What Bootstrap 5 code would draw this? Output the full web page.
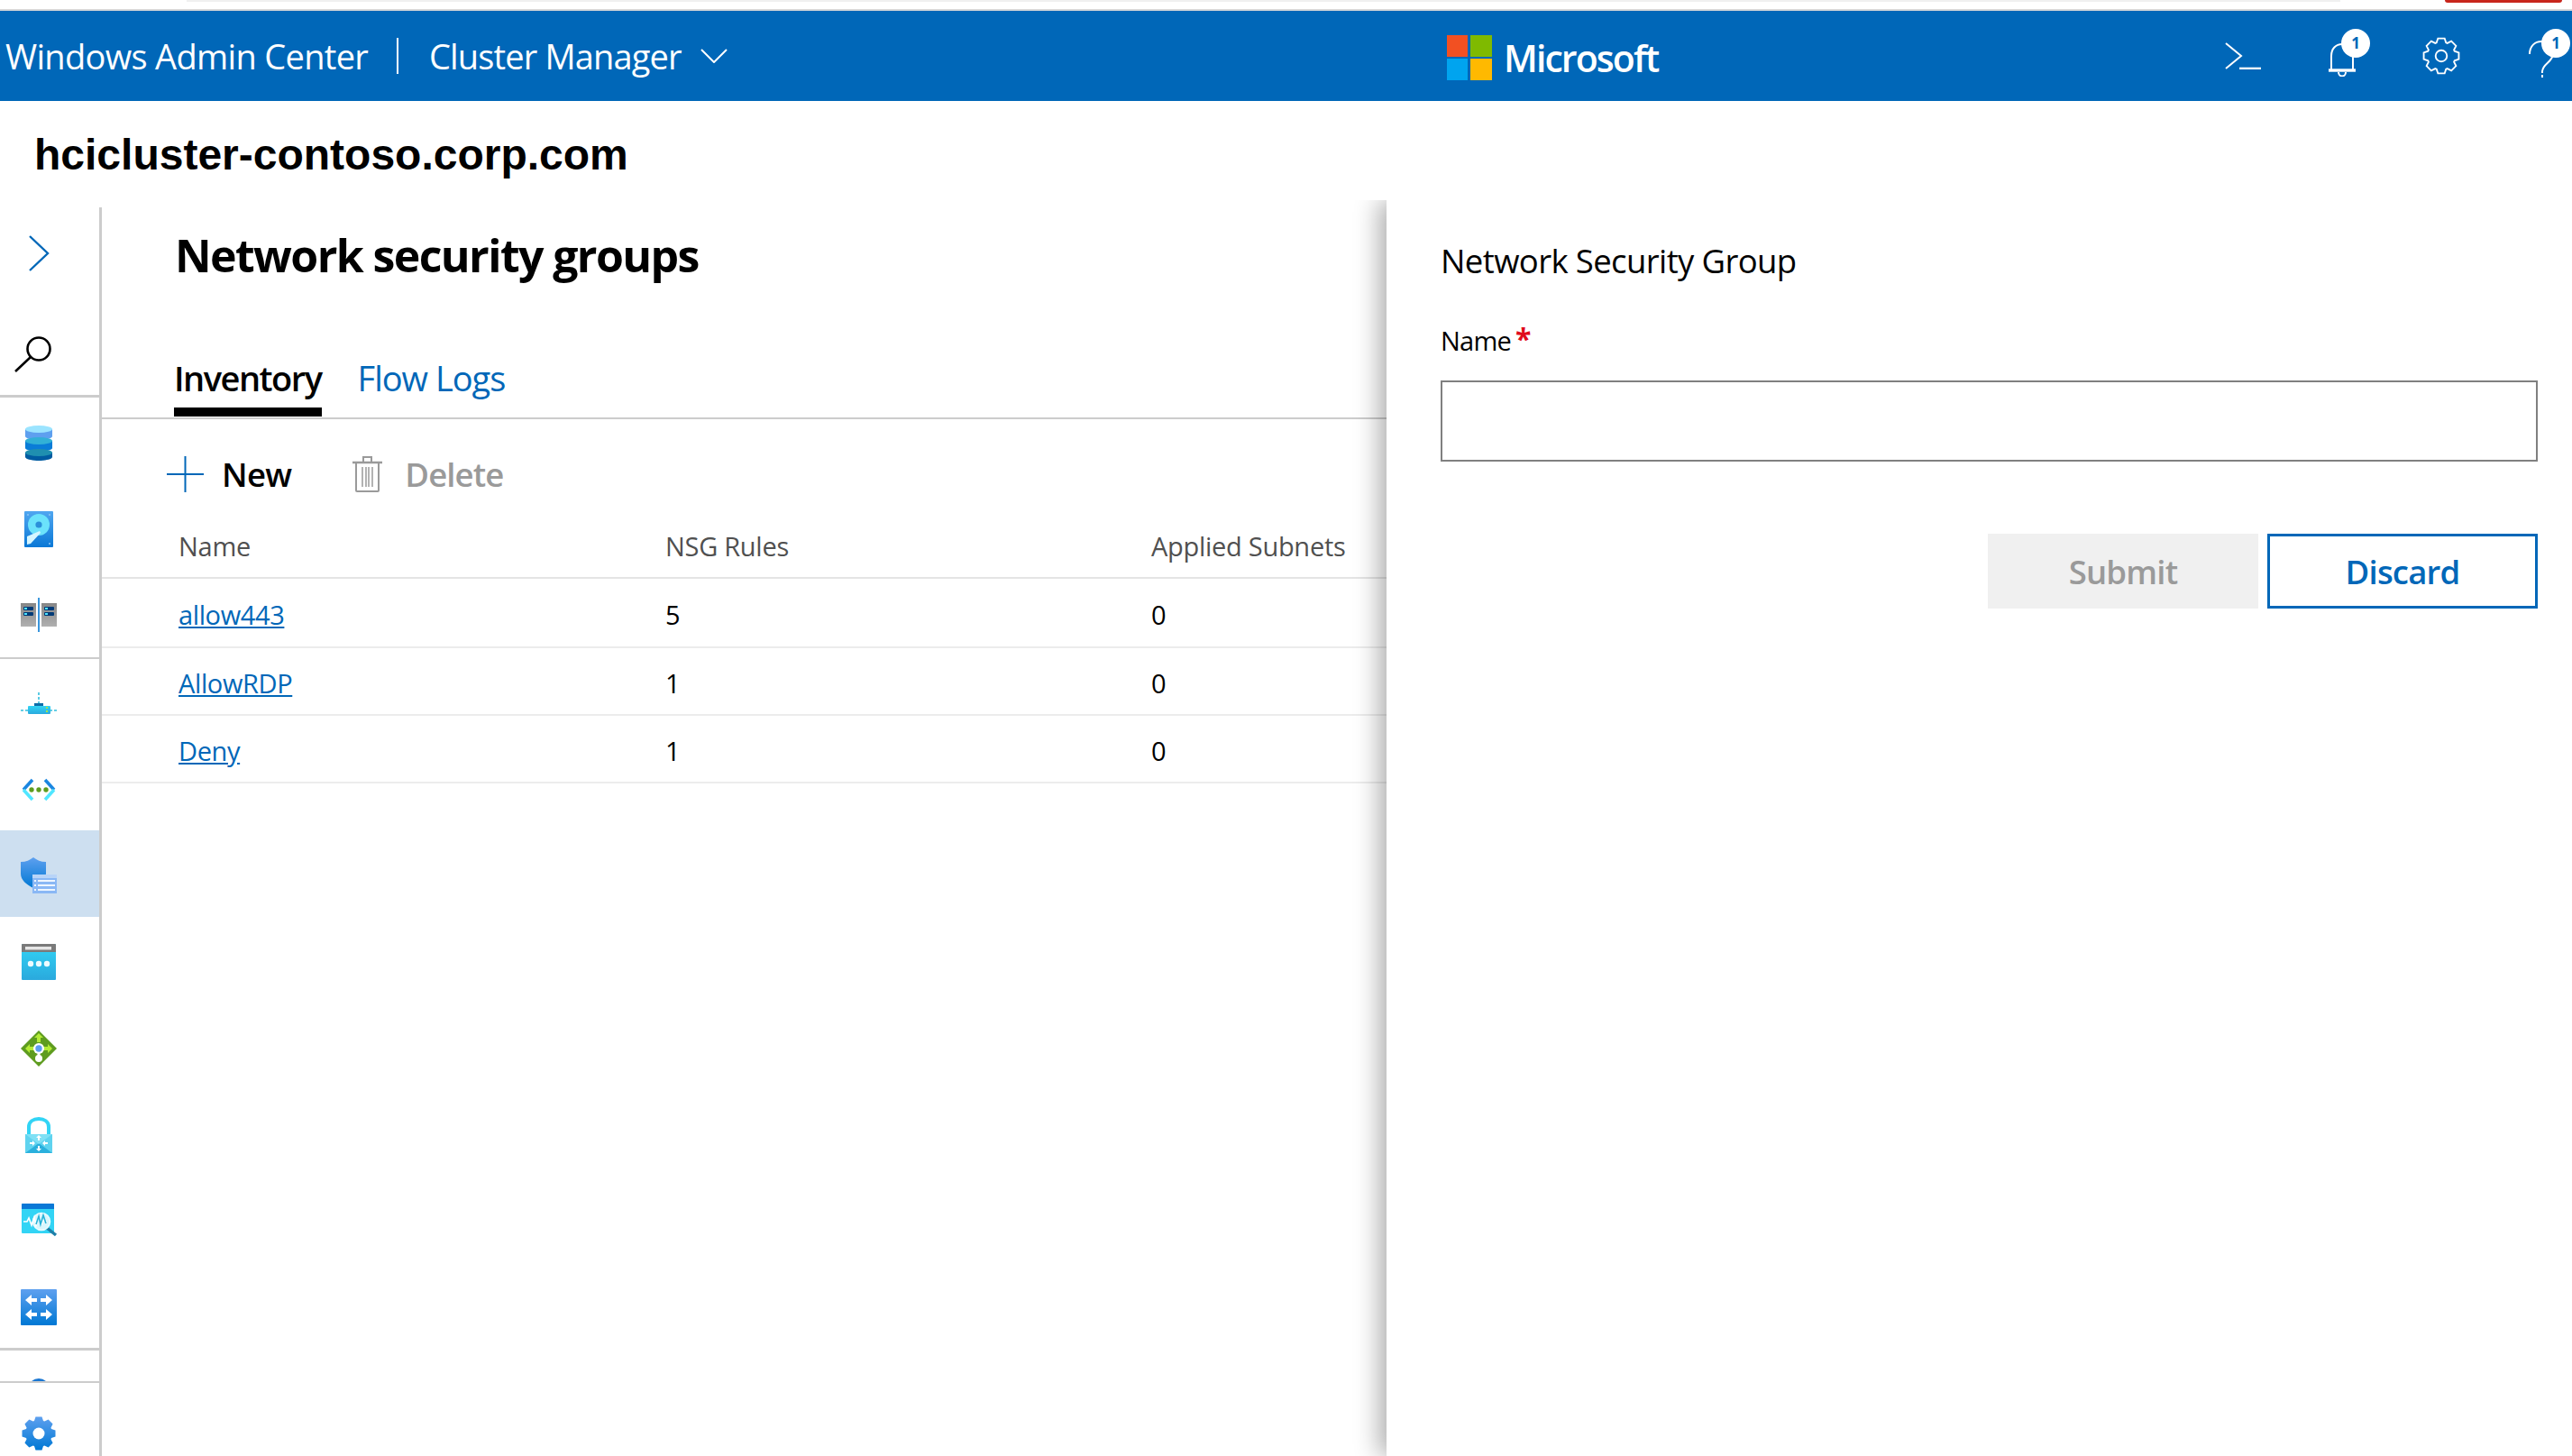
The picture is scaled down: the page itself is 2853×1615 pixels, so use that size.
<!DOCTYPE html>
<html lang="en">
<head>
<meta charset="utf-8">
<title>Network security groups</title>
<link rel="stylesheet" href="https://cdn.jsdelivr.net/npm/bootstrap@5.3.0/dist/css/bootstrap.min.css">
<style>
:root{--wac:#0067b8;}
html,body{height:100%;overflow:hidden;background:#fff;}
body{font-family:"Open Sans","Noto Sans",sans-serif;color:#000;}
.svg-defs{width:0;height:0;}
.strip-top{height:10px;}
.strip-pad{width:207px;}
.strip-grey{width:2389px;height:2px;background:#f0f0f0;}
.strip-gap{width:116px;}
.strip-red{width:130px;height:3px;background:#c8261c;border-radius:0 0 6px 6px;}
.wac-bar{height:102px;background:var(--wac);border-top:2px solid #d8d8d8;padding:0;flex-wrap:nowrap;color:#fff;}
.wac-brand{width:440px;padding-left:6px;font-size:38px;font-weight:500;letter-spacing:-.68px;white-space:nowrap;}
.wac-sep{width:2px;height:40px;background:#fff;}
.wac-prod{width:335px;padding-left:34px;font-size:38px;font-weight:500;letter-spacing:-.85px;white-space:nowrap;}
.wac-caret{width:30px;height:16px;}
.wac-logo-wrap{margin-left:798px;width:863px;padding-top:3px;}
.wac-logo{width:50px;height:50px;margin-right:13px;}
.wac-ms{font-size:41px;font-weight:600;letter-spacing:-1.9px;line-height:50px;}
.term-ic{width:40px;height:30px;margin-right:75px;}
.bell-box{position:relative;width:46px;height:60px;margin-right:58px;}
.bell-ic{position:absolute;left:0;top:15px;width:30px;height:38px;}
.gear-box{width:42px;height:42px;margin-right:75px;}
.q-box{position:relative;width:47px;height:60px;}
.q-ic{position:absolute;left:0;top:13px;width:30px;height:41px;}
.bub{position:absolute;top:0;left:14px;width:32px;height:32px;border-radius:50%;background:#fff;color:var(--wac);font-size:17px;font-weight:700;line-height:32px;text-align:center;}
.q-box .bub{left:15px;}
.host-band{height:118px;padding:27px 0 0 38px;}
.host-name{font-family:"Liberation Sans",Arial,sans-serif;font-weight:700;font-size:48px;line-height:66px;margin:0;}
.work{height:1385px;}
.rail{width:113px;flex:none;border-right:3px solid #ccc;height:100%;overflow:hidden;}
.rail-top{height:211px;padding-top:3px;border-bottom:3px solid #ccc;}
.rail-top .rail-it:last-child{margin-top:16px;}
.rail-group{border-bottom:2px solid #ccc;}
.rail-group.rg-two{border-bottom-width:3px;}
.rail-it{height:96px;display:flex;align-items:center;justify-content:center;padding-right:24px;}
.rail-group .rail-it{padding-top:4px;}
.rail-it.it-s{height:95px;}
.rail-it.it-e{height:94px;}
.rail-it svg{width:40px;height:40px;display:block;overflow:visible;}
.rail-it.on{background:#cddff0;}
.rail-clip{height:36px;border-bottom:2px solid #ccc;overflow:hidden;position:relative;padding-right:24px;}
.rail-arc{width:24px;height:24px;border-radius:50%;background:#1b77d2;margin:31px auto 0;}
.rail-last{padding:36px 24px 0 0;}
.rail-last svg{width:40px;height:40px;display:block;margin:0 auto;}
.mainp{width:1425px;flex:none;}
.page-ttl{height:150px;margin:0;padding:18px 0 0 81px;font-size:50px;line-height:70px;font-weight:700;letter-spacing:-1.6px;}
.wac-tabs{height:85px;border-bottom:2px solid #ccc;padding-left:80px;gap:40px;align-items:flex-end;flex-wrap:nowrap;}
.wac-tabs .nav-link{padding:0;height:73px;font-size:38px;line-height:58px;letter-spacing:-1px;color:var(--wac);border-bottom:0;border-radius:0;}
.wac-tabs .nav-link.active{color:#000;font-weight:600;border-bottom:10px solid #000;letter-spacing:-1.5px;margin-bottom:1px;height:72px;}
.tool-row{height:120px;padding:2px 0 0 72px;}
.tool-btn{display:flex;align-items:center;background:none;border:0;padding:0;font-size:36.5px;font-weight:600;letter-spacing:-.7px;line-height:50px;color:#000;}
.tool-btn:disabled{color:#9a9a9a;opacity:1;letter-spacing:-.9px;}
.tool-btn svg{display:block;}
.ic-plus{width:41px;height:40px;margin-right:20px;}
.ic-trash{width:33px;height:40px;margin-right:25px;}
.tool-del{margin-left:68px;}
.nsg-table{table-layout:fixed;width:100%;margin:0;font-size:29px;}
.nsg-table th,.nsg-table td{padding:0;border-bottom:2px solid #ececec;color:#000;box-shadow:none;background:transparent;}
.nsg-table th{height:56px;vertical-align:top;padding-top:1px;font-weight:400;color:#505050;line-height:40px;border-bottom-color:#e4e4e4;letter-spacing:-.28px;}
.nsg-table td{height:75px;vertical-align:middle;padding-top:5px;line-height:40px;letter-spacing:-.38px;}
.nsg-table tbody tr:first-child td{height:77px;}
.nsg-table .c1{width:625px;padding-left:85px;}
.nsg-table .c2{width:539px;}
.nsg-table a{color:var(--wac);text-decoration:underline;}
.side-pan{position:relative;z-index:5;flex:1 1 0;margin-top:-8px;padding:32px 38px 0 60px;background:#fff;box-shadow:-8px 0 26px rgba(0,0,0,.32);clip-path:inset(0 0 -40px -40px);}
.side-ttl{font-size:36.5px;font-weight:400;line-height:70px;letter-spacing:-.62px;margin:0 0 34px;}
.side-lbl{font-size:29px;line-height:40px;letter-spacing:-.75px;margin:0 0 24px;display:block;}
.side-star{color:#e00b1c;font-size:32px;font-weight:700;line-height:20px;vertical-align:top;position:relative;top:8px;margin-left:5px;}
.side-inp{height:90px;border:2px solid #808080;border-radius:0;padding:0 14px;box-shadow:none;}
.side-acts{margin-top:80px;gap:10px;}
.side-btn{width:300px;height:83px;border-radius:0;font-size:36.5px;font-weight:600;letter-spacing:-.8px;padding:2px 0 0;line-height:1;}
.btn-sub:disabled{background:#f0f0f0;border:0;color:#9a9a9a;opacity:1;}
.btn-disc{background:#fff;border:3px solid var(--wac);color:var(--wac);}
</style>
</head>
<body class="d-flex flex-column">
<svg class="svg-defs position-absolute" aria-hidden="true">
<defs>
<linearGradient id="gBlue" x1="0" y1="0" x2="0" y2="1"><stop offset="0" stop-color="#5ea0ef"/><stop offset="1" stop-color="#0078d4"/></linearGradient>
<linearGradient id="gCyan" x1="0" y1="0" x2="0" y2="1"><stop offset="0" stop-color="#32d4f5"/><stop offset="1" stop-color="#2aa9dd"/></linearGradient>
<linearGradient id="gGrey" x1="0" y1="0" x2="0" y2="1"><stop offset="0" stop-color="#868686"/><stop offset="1" stop-color="#b0b0b0"/></linearGradient>
<linearGradient id="gDisk" x1="0" y1="0" x2="0" y2="1"><stop offset="0" stop-color="#50a6f0"/><stop offset="1" stop-color="#0a78d6"/></linearGradient>
</defs>
</svg>

<div class="strip-top d-flex flex-shrink-0"><div class="strip-pad"></div><div class="strip-grey"></div><div class="strip-gap"></div><div class="strip-red"></div></div>

<nav class="navbar wac-bar flex-shrink-0 justify-content-start">
  <div class="wac-brand">Windows Admin Center</div>
  <div class="wac-sep"></div>
  <div class="wac-prod">Cluster Manager</div>
  <svg class="wac-caret" viewBox="0 0 30 16" fill="none" stroke="#fff" stroke-width="2"><path d="M1 1l14 14L29 1"/></svg>
  <div class="wac-logo-wrap d-flex align-items-center">
    <svg class="wac-logo" viewBox="0 0 50 50"><rect width="23" height="24" fill="#f25022"/><rect x="26" width="24" height="24" fill="#7fba00"/><rect y="26" width="23" height="24" fill="#00a4ef"/><rect x="26" y="26" width="24" height="24" fill="#ffb900"/></svg>
    <span class="wac-ms">Microsoft</span>
  </div>
  <svg class="term-ic" viewBox="0 0 40 30" fill="none" stroke="#fff" stroke-width="2"><path d="M1 1l17 14L1 29"/><path d="M16 29h24" stroke-width="2.6"/></svg>
  <div class="bell-box">
    <svg class="bell-ic" viewBox="0 0 30 38" fill="none" stroke="#fff" stroke-width="2"><path d="M3 30V15C3 7 8 2 15 2s12 5 12 13v15"/><path d="M0 31h30" stroke-width="3.4"/><path d="M11 33c0 6 8 6 8 0"/></svg>
    <div class="bub">1</div>
  </div>
  <svg class="gear-box" viewBox="-20 -20 40 40" fill="none" stroke="#fff" stroke-width="1.8"><path d="M-5-14L-3.500-18.500H3.500L5-14L6.360-13.440L10.610-15.560L15.560-10.610L13.440-6.360L14-5L18.500-3.500V3.500L14 5L13.440 6.360L15.560 10.610L10.610 15.560L6.360 13.440L5 14L3.500 18.500H-3.500L-5 14L-6.360 13.440L-10.610 15.560L-15.560 10.610L-13.440 6.360L-14 5L-18.500 3.500V-3.500L-14-5L-13.440-6.360L-15.560-10.610L-10.610-15.560L-6.360-13.440Z"/><circle r="6"/></svg>
  <div class="q-box">
    <svg class="q-ic" viewBox="0 0 30 41" fill="none" stroke="#fff" stroke-width="2"><path d="M2 15C2 6 8 1 15 1s13 5 13 13c0 10-11 11-12 20v2"/><path d="M16 38v3"/></svg>
    <div class="bub">1</div>
  </div>
</nav>

<div class="host-band flex-shrink-0"><h2 class="host-name">hcicluster-contoso.corp.com</h2></div>

<div class="work d-flex flex-grow-1">
  <aside class="rail">
    <div class="rail-top">
      <div class="rail-it"><svg viewBox="0 0 40 40" fill="none" stroke="#0067b8" stroke-width="2.4"><path d="M10 1l20 19-20 19"/></svg></div>
      <div class="rail-it"><svg viewBox="0 0 40 40" fill="none" stroke="#000" stroke-width="2.6"><circle cx="20" cy="14" r="12.500"/><path d="M11 23L-6 39"/></svg></div>
    </div>
    <div class="rail-group">
      <div class="rail-it"><svg viewBox="0 0 40 40"><path d="M5 5v8c0 2 7 4 15 4s15-2 15-4V5z" fill="#5ea0ef"/><ellipse cx="20" cy="5" rx="15" ry="4" fill="#9be4ff"/><path d="M5 18v8c0 2 7 3.500 15 3.500s15-1.500 15-3.500v-8z" fill="#0a7cd7"/><ellipse cx="20" cy="18" rx="15" ry="4" fill="#32b0d6"/><path d="M5 31v5c0 2 7 4 15 4s15-2 15-4v-5z" fill="#005ba1"/><ellipse cx="20" cy="31" rx="15" ry="4" fill="#1f8fb0"/></svg></div>
      <div class="rail-it"><svg viewBox="0 0 40 40"><rect x="4" width="32" height="40" rx="1" fill="url(#gDisk)"/><circle cx="20" cy="15" r="12" fill="#6be2fb"/><circle cx="20" cy="15" r="3.600" fill="#2b8fd9"/><path d="M7 28l14-6 1 2-11 12-4 1z" fill="#d6f6ff"/><g fill="#8cc4f5"><circle cx="8" cy="4" r="1"/><circle cx="32" cy="4" r="1"/><circle cx="32" cy="36" r="1"/></g></svg></div>
      <div class="rail-it"><svg viewBox="0 0 40 40"><rect y="6" width="17" height="26" fill="url(#gGrey)"/><rect x="23" y="6" width="17" height="26" fill="url(#gGrey)"/><g fill="#003b77"><rect x="3" y="10" width="11" height="4" rx="1"/><rect x="3" y="16" width="11" height="4" rx="1"/><rect x="26" y="10" width="11" height="4" rx="1"/><rect x="26" y="16" width="11" height="4" rx="1"/></g><g fill="#50e6ff"><rect x="4" y="11" width="3" height="2"/><rect x="4" y="17" width="3" height="2"/><rect x="27" y="11" width="3" height="2"/><rect x="27" y="17" width="3" height="2"/></g><rect x="19" width="2" height="38" fill="#3a96dd"/></svg></div>
    </div>
    <div class="rail-group rg-two">
      <div class="rail-it it-s"><svg viewBox="0 0 40 40"><g transform="translate(0,7)"><path d="M20 0v12" stroke="#32bedd" stroke-width="1.600" stroke-dasharray="3 2" fill="none"/><path d="M0 20h8M32 20h8" stroke="#32bedd" stroke-width="1.500" stroke-dasharray="3 2" fill="none"/><rect x="15" y="12" width="10" height="3" fill="#0e6da8"/><rect x="8" y="15" width="25" height="9" rx="1" fill="url(#gCyan)"/><rect x="28" y="16" width="2" height="2" fill="#a4e34c"/><rect x="28" y="20" width="2" height="2" fill="#a4e34c"/></g></svg></div>
      <div class="rail-it it-s"><svg viewBox="0 0 40 40" fill="none" stroke-width="3.600"><path d="M13 9L3 20" stroke="#1b86e0"/><path d="M3 20l10 11" stroke="#50e6ff"/><path d="M27 9l10 11" stroke="#1b86e0"/><path d="M37 20L27 31" stroke="#50e6ff"/><g fill="#5e9c1f" stroke="none"><circle cx="12" cy="20" r="2.700"/><circle cx="20" cy="20" r="2.700"/><circle cx="28" cy="20" r="2.700"/></g></svg></div>
      <div class="rail-it on"><svg viewBox="0 0 40 40"><path d="M0 5C6 5 10 3 14 0c4 3 8 5 14 5v13c0 7-6 12-14 16C6 30 0 25 0 18z" fill="url(#gBlue)"/><rect x="13" y="19" width="27" height="21" fill="#8ab8f5"/><rect x="13" y="19" width="27" height="4" fill="#b8d4f8"/><g fill="#eef6ff"><rect x="15" y="25" width="2" height="2"/><rect x="15" y="30" width="2" height="2"/><rect x="15" y="35" width="2" height="2"/><rect x="19" y="25" width="19" height="2"/><rect x="19" y="30" width="19" height="2"/><rect x="19" y="35" width="19" height="2"/></g></svg></div>
      <div class="rail-it"><svg viewBox="0 0 40 40"><rect x="1" width="38" height="40" rx="1" fill="url(#gCyan)"/><path d="M1 1a1 1 0 0 1 1-1h36a1 1 0 0 1 1 1v8H1z" fill="#7a7a7a"/><rect x="5" y="3" width="29" height="3.500" fill="#e6e6e6"/><g fill="#eefbff"><circle cx="11" cy="22" r="3.200"/><circle cx="20" cy="22" r="3.200"/><circle cx="29" cy="22" r="3.200"/></g></svg></div>
      <div class="rail-it"><svg viewBox="0 0 40 40"><path d="M20 0l20 20-20 20L0 20z" fill="#5e9c1f"/><g fill="#b4ec36"><path d="M20 3l5 5h-3v5h-4V8h-3z"/><path d="M5 20l5-5v3h8v4h-8v3z"/><path d="M35 20l-5-5v3h-8v4h8v3z"/></g><circle cx="20" cy="20" r="6" fill="#fff"/><circle cx="20" cy="20" r="3.700" fill="#5e9ef0"/><circle cx="20" cy="31" r="4" fill="#fff"/><path d="M18.500 24h3v5h-3z" fill="#fff"/></svg></div>
      <div class="rail-it"><svg viewBox="0 0 40 40"><path d="M9 20V11C9 5 14 2 20 2s11 3 11 9v9" fill="none" stroke="#32d4f5" stroke-width="4"/><rect x="5" y="19" width="30" height="21" fill="#5fd3ef"/><path d="M5 40l15-11 15 11z" fill="#2ab0dd"/><path d="M5 19l15 11 15-11z" fill="#7fe0f5"/><g fill="#fff"><path d="M20 20l-3 3h2v3h2v-3h2z"/><path d="M20 38l-3-3h2v-3h2v3h2z"/><path d="M16 29l-3-3v2h-3v2h3v2z"/><path d="M24 29l3-3v2h3v2h-3v2z"/></g></svg></div>
      <div class="rail-it"><svg viewBox="0 0 40 40"><rect x="1" width="36" height="33" rx="1" fill="#32d4f5"/><path d="M1 1a1 1 0 0 1 1-1h34a1 1 0 0 1 1 1v5H1z" fill="#0a78d6"/><path d="M29 27l10 8" stroke="#1e7fa8" stroke-width="3.500"/><circle cx="23" cy="20" r="9.500" fill="#d9f6fd" stroke="#eefcff" stroke-width="1.500"/><path d="M3 20h4l2-4 3 8 3-9 2 9 3-10 3 9 3-5 3 3" fill="none" stroke="#fff" stroke-width="1.600"/><path d="M17 23l3-9 2 9 3-10 3 9" fill="none" stroke="#27b3d8" stroke-width="1.600"/></svg></div>
      <div class="rail-it it-e"><svg viewBox="0 0 40 40"><rect width="40" height="40" rx="1" fill="url(#gBlue)"/><g fill="#fff"><path d="M5 12l7-6v4h6v4h-6v4z"/><path d="M35 12l-7-6v4h-6v4h6v4z"/><path d="M5 28l7-6v4h6v4h-6v4z"/><path d="M35 28l-7-6v4h-6v4h6v4z"/></g></svg></div>
    </div>
    <div class="rail-clip"><div class="rail-arc"></div></div>
    <div class="rail-last"><svg viewBox="-20 -20 40 40"><path fill="url(#gBlue)" fill-rule="evenodd" d="M-5-14L-3.500-18.500H3.500L5-14L6.360-13.440L10.610-15.560L15.560-10.610L13.440-6.360L14-5L18.500-3.500V3.500L14 5L13.440 6.360L15.560 10.610L10.610 15.560L6.360 13.440L5 14L3.500 18.500H-3.500L-5 14L-6.360 13.440L-10.610 15.560L-15.560 10.610L-13.440 6.360L-14 5L-18.500 3.500V-3.500L-14-5L-13.440-6.360L-15.560-10.610L-10.610-15.560L-6.360-13.440Z"/><circle r="6.500" fill="#fff"/></svg></div>
  </aside>

  <main class="mainp">
    <h1 class="page-ttl">Network security groups</h1>
    <ul class="nav wac-tabs">
      <li class="nav-item"><a class="nav-link active" href="#">Inventory</a></li>
      <li class="nav-item"><a class="nav-link" href="#">Flow Logs</a></li>
    </ul>
    <div class="tool-row d-flex align-items-center">
      <button class="tool-btn" type="button"><svg class="ic-plus" viewBox="0 0 41 40" fill="none" stroke="#0067b8" stroke-width="2"><path d="M20.500 0v40M0 20h41"/></svg>New</button>
      <button class="tool-btn tool-del" type="button" disabled><svg class="ic-trash" viewBox="0 0 33 40" fill="none" stroke="#9a9a9a" stroke-width="2"><path d="M0 7h33" stroke-width="2.600"/><path d="M12 6V1h9v5"/><path d="M4 7v31a1 1 0 0 0 1 1h23a1 1 0 0 0 1-1V7"/><path d="M11 12v22M15 12v22M18 12v22M22 12v22" stroke-width="1.500"/></svg>Delete</button>
    </div>
    <table class="table nsg-table">
      <thead><tr><th class="c1">Name</th><th class="c2">NSG Rules</th><th>Applied Subnets</th></tr></thead>
      <tbody>
        <tr><td class="c1"><a href="#">allow443</a></td><td>5</td><td>0</td></tr>
        <tr><td class="c1"><a href="#">AllowRDP</a></td><td>1</td><td>0</td></tr>
        <tr><td class="c1"><a href="#">Deny</a></td><td>1</td><td>0</td></tr>
      </tbody>
    </table>
  </main>

  <section class="side-pan">
    <h2 class="side-ttl">Network Security Group</h2>
    <label class="side-lbl" for="nsgName">Name<span class="side-star">*</span></label>
    <input id="nsgName" class="form-control side-inp" type="text">
    <div class="side-acts d-flex justify-content-end">
      <button class="btn side-btn btn-sub" type="button" disabled>Submit</button>
      <button class="btn side-btn btn-disc" type="button">Discard</button>
    </div>
  </section>
</div>
<script src="https://cdn.jsdelivr.net/npm/bootstrap@5.3.0/dist/js/bootstrap.bundle.min.js"></script>
</body>
</html>
